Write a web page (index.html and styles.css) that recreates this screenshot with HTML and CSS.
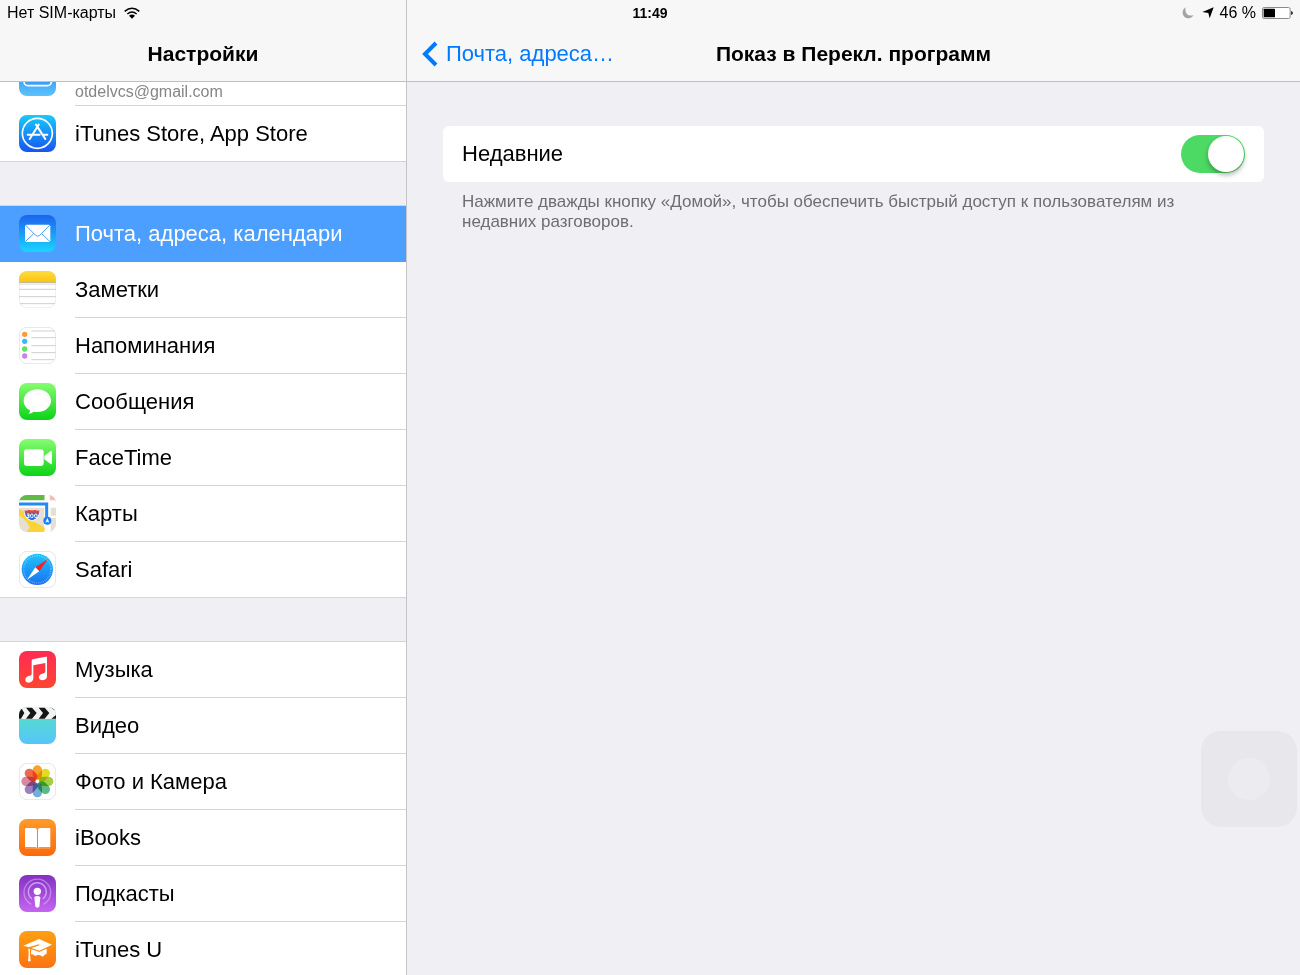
FILE: index.html
```html
<!DOCTYPE html>
<html lang="ru">
<head>
<meta charset="utf-8">
<meta name="viewport" content="width=device-width, initial-scale=1">
<title>Настройки</title>
<link rel="stylesheet" href="styles.css">
</head>
<body>
<div class="app">
  <div class="status">
    <div class="status-left">
      <span>Нет SIM-карты</span>
      <svg class="wifi" viewBox="0 0 48 36" aria-hidden="true"><g fill="none" stroke="#000" stroke-width="4.5"><path d="M2 13Q24-6 46 13"/><path d="M10 21Q24 9 38 21"/></g><path d="M15 26Q24 19 33 26L24 35Z"/></svg>
    </div>
    <time class="clock">11:49</time>
    <div class="status-right">
      <svg class="moon" viewBox="0 0 36 36" aria-hidden="true"><path fill="#a3a3a5" d="M11 1A17.500 17.500 0 1 0 35 24Q22 29 14 20Q8 11 11 1Z"/></svg>
      <svg class="arrow" viewBox="0 0 36 36" aria-hidden="true"><path d="M35 1L23 34L19 18L1 15Z"/></svg>
      <span>46 %</span>
      <svg class="battery" viewBox="0 0 93 36" aria-hidden="true"><rect x="1.5" y="1.500" width="83" height="33" rx="5" fill="#fff" stroke="#8a8a8a" stroke-width="3"/><rect x="5" y="5" width="34" height="26" rx="2"/><path fill="#333" d="M87 12Q93 14 93 18T87 24Z"/></svg>
    </div>
  </div>

  <aside class="sidebar">
    <header class="bar"><h1 class="title">Настройки</h1></header>
    <nav class="list">
      <div class="group group-scrolled">
        <a class="row" href="#icloud">
          <svg class="icon" viewBox="0 0 111 111" aria-hidden="true"><defs><linearGradient id="gCloud" x2="0" y2="1"><stop offset="0" stop-color="#1d7cf2"/><stop offset="1" stop-color="#5cc3fb"/></linearGradient></defs><rect width="111" height="111" rx="24" fill="url(#gCloud)"/><rect x="15" y="30" width="82" height="50" rx="12" fill="#3f9ff5" stroke="#fff" stroke-width="5"/></svg>
          <span class="label account">otdelvcs@gmail.com</span>
        </a>
        <a class="row" href="#store">
          <svg class="icon" viewBox="0 0 111 111" aria-hidden="true"><defs><linearGradient id="gStore" x2="0" y2="1"><stop offset="0" stop-color="#18cbfd"/><stop offset="1" stop-color="#1654f0"/></linearGradient></defs><rect width="111" height="111" rx="24" fill="url(#gStore)"/><g fill="none" stroke="#fff" stroke-width="5"><circle cx="55" cy="55" r="45"/><g stroke-width="6" stroke-linecap="round"><path d="M51 29L79 72M59 29L32 72M26 59H62M74 59H85"/></g></g></svg>
          <span class="label">iTunes Store, App Store</span>
        </a>
      </div>

      <div class="group">
        <a class="row row-selected" href="#mail" aria-current="page">
          <svg class="icon" viewBox="0 0 111 111" aria-hidden="true"><defs><linearGradient id="gMail" x2="0" y2="1"><stop offset="0" stop-color="#1d62f0"/><stop offset="1" stop-color="#19d5fd"/></linearGradient></defs><rect width="111" height="111" rx="24" fill="url(#gMail)"/><rect x="18" y="29" width="76" height="52" rx="5" fill="#fff"/><path d="M20 31L50 61Q56 66 62 61L92 31M20 79L44 56M92 79L68 56" fill="none" stroke="#4d9df7" stroke-width="3"/></svg>
          <span class="label">Почта, адреса, календари</span>
        </a>
        <a class="row" href="#notes">
          <svg class="icon" viewBox="0 0 111 111" aria-hidden="true"><defs><linearGradient id="gNotes" x2="0" y2="1"><stop offset="0" stop-color="#ffdc42"/><stop offset="1" stop-color="#fdc50c"/></linearGradient><clipPath id="tile"><rect width="111" height="111" rx="24"/></clipPath></defs><g clip-path="url(#tile)"><rect width="111" height="111" fill="#fff"/><rect width="111" height="33" fill="url(#gNotes)"/><path d="M0 35H111" stroke="#b9aa88" stroke-width="3"/><path d="M0 40H111" stroke="#e5e5e5" stroke-width="3"/><path d="M0 55H111M0 77H111M0 98H111" stroke="#cfcfd2" stroke-width="3"/></g><rect x="1" y="1" width="109" height="109" rx="23" fill="none" stroke="#ccc" stroke-opacity=".5" stroke-width="2"/></svg>
          <span class="label">Заметки</span>
        </a>
        <a class="row" href="#reminders">
          <svg class="icon" viewBox="0 0 111 111" aria-hidden="true"><rect x="1" y="1" width="109" height="109" rx="23" fill="#fff" stroke="#e6e6e8" stroke-width="3"/><path d="M37 12H107M37 32H110M37 56H110M37 77H110M37 98H105" stroke="#cfcfd2" stroke-width="3"/><circle cx="17" cy="22" r="8" fill="#ff9a2e"/><circle cx="17" cy="43" r="8" fill="#41b5fb"/><circle cx="17" cy="66" r="8" fill="#63e35d"/><circle cx="17" cy="87" r="8" fill="#ca83e8"/></svg>
          <span class="label">Напоминания</span>
        </a>
        <a class="row" href="#messages">
          <svg class="icon" viewBox="0 0 111 111" aria-hidden="true"><defs><linearGradient id="gGreen" x2="0" y2="1"><stop offset="0" stop-color="#87fc70"/><stop offset="1" stop-color="#0bd318"/></linearGradient></defs><rect width="111" height="111" rx="24" fill="url(#gGreen)"/><path fill="#fff" d="M55 19C78 19 96 34 96 53S78 87 55 87Q49 87 44 86Q38 92 28 92Q34 88 33 82C21 76 14 65 14 53C14 34 32 19 55 19Z"/></svg>
          <span class="label">Сообщения</span>
        </a>
        <a class="row" href="#facetime">
          <svg class="icon" viewBox="0 0 111 111" aria-hidden="true"><rect width="111" height="111" rx="24" fill="url(#gGreen)"/><rect x="15" y="31" width="59" height="50" rx="9" fill="#fff"/><path fill="#fff" d="M76 51L94 37Q99 34 99 40V72Q99 78 94 74L76 61Z"/></svg>
          <span class="label">FaceTime</span>
        </a>
        <a class="row" href="#maps">
          <svg class="icon" viewBox="0 0 111 111" aria-hidden="true"><g clip-path="url(#tile)"><rect width="111" height="111" fill="#e6e0d3"/><path fill="#63b947" d="M0 0H77V18H0Z"/><path fill="#f9b9b9" d="M93 0H111V18H93Z"/><path fill="#fff" d="M0 16H111V38H95V111H76V38H0ZM77 0H92V20H77ZM92 62H111V69H92Z"/><path d="M-4 50Q22 60 36 86Q48 103 76 108" fill="none" stroke="#fbd337" stroke-width="18"/><path fill="#fbd337" d="M22 111L45 80L75 96V111Z"/><path d="M0 27H83V74" fill="none" stroke="#2588f5" stroke-width="9"/><path d="M17 47Q24 49 29 45Q39 49 49 45Q54 49 61 47Q65 68 39 78Q13 68 17 47Z" fill="#2b6dcf" stroke="#fff" stroke-width="3"/><path fill="#e3443f" d="M17 46Q24 48 29 44Q39 48 49 44Q54 48 61 46V53H17Z"/><g fill="none" stroke="#fff" stroke-width="3"><path d="M24 57H30V62H26H30V68H24"/><rect x="35" y="57" width="7" height="11" rx="3"/><rect x="47" y="57" width="7" height="11" rx="3"/></g><circle cx="85" cy="77" r="12" fill="#1f7df1"/><path fill="#fff" d="M85 69L91 83L85 80L79 83Z"/></g></svg>
          <span class="label">Карты</span>
        </a>
        <a class="row" href="#safari">
          <svg class="icon" viewBox="0 0 111 111" aria-hidden="true"><defs><linearGradient id="gSafari" x2="0" y2="1"><stop offset="0" stop-color="#1cc6fb"/><stop offset="1" stop-color="#1d6ff2"/></linearGradient></defs><rect x="1" y="1" width="109" height="109" rx="23" fill="#fff" stroke="#e6e6e8" stroke-width="3"/><circle cx="55" cy="55" r="47" fill="url(#gSafari)"/><circle cx="55" cy="55" r="41" fill="none" stroke="#fff" stroke-opacity=".5" stroke-width="5" stroke-dasharray="1.500 4"/><path fill="#fb1f1f" d="M86 25L61 61L49 49Z"/><path fill="#fff" d="M24 86L49 49L61 61Z"/></svg>
          <span class="label">Safari</span>
        </a>
      </div>

      <div class="group">
        <a class="row" href="#music">
          <svg class="icon" viewBox="0 0 111 111" aria-hidden="true"><defs><linearGradient id="gMusic" x2="0" y2="1"><stop offset="0" stop-color="#ff2a55"/><stop offset="1" stop-color="#ff4631"/></linearGradient></defs><rect width="111" height="111" rx="24" fill="url(#gMusic)"/><path fill="#fff" d="M38 29Q38 26 41 25L80 17Q84 16 84 20V75Q84 86 71 88Q60 88 60 79Q60 70 70 68Q79 67 79 61V36L43 43V82Q42 93 30 95Q19 95 19 86Q19 78 29 75Q38 74 38 68Z"/></svg>
          <span class="label">Музыка</span>
        </a>
        <a class="row" href="#video">
          <svg class="icon" viewBox="0 0 111 111" aria-hidden="true"><defs><linearGradient id="gVideo" x2="0" y2="1"><stop offset="0" stop-color="#53e2bd"/><stop offset="1" stop-color="#57c5fb"/></linearGradient></defs><g clip-path="url(#tile)"><rect width="111" height="111" fill="url(#gVideo)"/><rect width="111" height="36" fill="#f2f2f2"/><path fill="#151515" d="M-12 2H6L16 18L6 35H-12L0 18ZM21 2H39L53 18L39 35H21L34 18ZM59 2H77L91 18L77 35H59L72 18ZM97 2H111V13ZM111 24V35H97Z"/></g></svg>
          <span class="label">Видео</span>
        </a>
        <a class="row" href="#photos">
          <svg class="icon" viewBox="0 0 111 111" aria-hidden="true"><defs><rect id="petal" x="41" y="7" width="28" height="43" rx="14"/></defs><rect x="1" y="1" width="109" height="109" rx="23" fill="#fff" stroke="#e6e6e8" stroke-width="3"/><g class="petals"><use href="#petal" fill="#f9a12f"/><use href="#petal" fill="#e4dc22" transform="rotate(45 55 55)"/><use href="#petal" fill="#a4cf44" transform="rotate(90 55 55)"/><use href="#petal" fill="#5dbb80" transform="rotate(135 55 55)"/><use href="#petal" fill="#75add9" transform="rotate(180 55 55)"/><use href="#petal" fill="#9b80bd" transform="rotate(225 55 55)"/><use href="#petal" fill="#d888a5" transform="rotate(270 55 55)"/><use href="#petal" fill="#ef6950" transform="rotate(315 55 55)"/></g></svg>
          <span class="label">Фото и Камера</span>
        </a>
        <a class="row" href="#ibooks">
          <svg class="icon" viewBox="0 0 111 111" aria-hidden="true"><defs><linearGradient id="gBooks" x2="0" y2="1"><stop offset="0" stop-color="#ff9a2a"/><stop offset="1" stop-color="#fb6a0c"/></linearGradient></defs><rect width="111" height="111" rx="24" fill="url(#gBooks)"/><path fill="#fff" d="M18 30Q18 27 22 27H46Q54 27 54 33V86Q51 84 46 84H18ZM57 33Q57 27 65 27H90Q94 27 94 30V84H65Q60 84 57 86Z"/><path d="M18 87H48Q55 87 56 90Q57 87 64 87H94" fill="none" stroke="#fbc9a0" stroke-width="2"/></svg>
          <span class="label">iBooks</span>
        </a>
        <a class="row" href="#podcasts">
          <svg class="icon" viewBox="0 0 111 111" aria-hidden="true"><defs><linearGradient id="gPod" x2="0" y2="1"><stop offset="0" stop-color="#8430c4"/><stop offset="1" stop-color="#c566f1"/></linearGradient></defs><rect width="111" height="111" rx="24" fill="url(#gPod)"/><g fill="none" stroke="#e4c4fa" stroke-width="4"><path stroke-opacity=".5" d="M37 88A40 40 0 1 1 73 88"/><path stroke-opacity=".7" d="M39 72A27 27 0 1 1 71 72"/></g><circle cx="55" cy="49" r="11" fill="#fff"/><path fill="#fff" d="M46 68Q46 63 55 63T64 68L61 94Q60 98 55 98T49 94Z"/></svg>
          <span class="label">Подкасты</span>
        </a>
        <a class="row" href="#itunesu">
          <svg class="icon" viewBox="0 0 111 111" aria-hidden="true"><defs><linearGradient id="gU" x2="0" y2="1"><stop offset="0" stop-color="#ff9f12"/><stop offset="1" stop-color="#fb7313"/></linearGradient></defs><rect width="111" height="111" rx="24" fill="url(#gU)"/><path fill="#fff" d="M60 24L99 41L61 59L37 51L62 43L59 40L29 49L13 44ZM37 55L61 63L83 53V68Q76 70 72 77Q60 68 48 75Q45 69 36 70ZM28 53H33V70L35 91H27L29 70Z"/></svg>
          <span class="label">iTunes U</span>
        </a>
      </div>
    </nav>
  </aside>

  <main class="detail">
    <header class="bar bar-detail">
      <a class="back" href="#mail"><svg class="chevron" viewBox="0 0 16 26" aria-hidden="true"><path d="M14 2L3 13L14 24" fill="none" stroke="#007aff" stroke-width="4"/></svg>Почта, адреса…</a>
      <h2 class="title">Показ в Перекл. программ</h2>
    </header>
    <section class="content">
      <div class="card">
        <label for="recents">Недавние</label>
        <input class="switch" type="checkbox" role="switch" id="recents" aria-describedby="hint" checked>
      </div>
      <p class="hint" id="hint">Нажмите дважды кнопку «Домой», чтобы обеспечить быстрый доступ к пользователям из недавних разговоров.</p>
    </section>
  </main>
  <button class="assistive" type="button" aria-label="AssistiveTouch"></button>
</div>
</body>
</html>
```
FILE: styles.css
```css
* {
  box-sizing: border-box;
}

body {
  margin: 0;
  background: #efeff4;
  color: #000;
  font-family: "Liberation Sans", Arial, sans-serif;
  font-size: 22px;
  line-height: 28px;
}

a {
  color: inherit;
  text-decoration: none;
}

.app {
  position: relative;
  display: grid;
  grid-template-columns: 407px 1fr;
  height: 100vh;
  overflow: hidden;
}

.status {
  position: absolute;
  inset: 0 0 auto 0;
  display: grid;
  grid-template-columns: 1fr auto 1fr;
  align-items: center;
  height: 26px;
  padding: 0 7px;
  font-size: 16px;
  line-height: 26px;
}

.status-left,
.status-right {
  display: flex;
  align-items: center;
  gap: 8px;
}

.status-right {
  justify-content: flex-end;
  gap: 6px;
}

.clock {
  font-weight: bold;
  font-size: 14px;
}

.wifi {
  width: 16px;
  height: 12px;
}

.moon,
.arrow {
  width: 12px;
  height: 12px;
}

.moon {
  margin-right: 2px;
}

.battery {
  width: 31px;
  height: 12px;
}

.sidebar {
  display: flex;
  flex-direction: column;
  min-height: 0;
  border-right: 1px solid #c4c4c8;
}

.bar {
  display: flex;
  flex: none;
  align-items: center;
  justify-content: center;
  height: 82px;
  padding-top: 26px;
  border-bottom: 1px solid #c0c0c3;
  background: #f7f7f7;
}

.title {
  margin: 0;
  font-size: 21px;
  font-weight: bold;
}

.bar-detail {
  display: grid;
  grid-template-columns: 1fr auto 1fr;
  padding-right: 15px;
  padding-left: 15px;
}

.back {
  display: flex;
  align-items: center;
  gap: 8px;
  color: #007aff;
}

.chevron {
  width: 16px;
  height: 26px;
}

.list {
  flex: 1;
  min-height: 0;
  overflow: hidden;
}

.group {
  margin-bottom: 44px;
  background: #fff;
  box-shadow: 0 -1px #d5d5d8;
}

.group-scrolled {
  margin-top: -32px;
}

.row {
  display: flex;
  gap: 19px;
  height: 56px;
  padding-left: 19px;
}

.icon {
  flex: none;
  width: 37px;
  height: 37px;
  margin-top: 9px;
}

.label {
  flex: 1;
  border-bottom: 1px solid #d5d5d8;
  line-height: 56px;
}

.row:last-child {
  border-bottom: 1px solid #d5d5d8;
}

.row:last-child .label {
  border-bottom: 0;
}

.account {
  padding-top: 32px;
  color: #868686;
  font-size: 16px;
  line-height: 20px;
}

.row-selected {
  background: #4c9fff;
  color: #fff;
}

.row-selected .label {
  border-color: #4c9fff;
}

.petals {
  isolation: isolate;
}

.petals use {
  mix-blend-mode: multiply;
}

.content {
  padding: 44px 36px;
}

.card {
  display: flex;
  align-items: center;
  justify-content: space-between;
  height: 56px;
  padding: 0 19px;
  border-radius: 6px;
  background: #fff;
}

.switch {
  display: flex;
  align-items: center;
  justify-content: flex-end;
  width: 64px;
  height: 38px;
  margin: 0;
  padding: 1px;
  border-radius: 20px;
  background: #4cd964;
  appearance: none;
}

.switch::before {
  width: 36px;
  height: 36px;
  border-radius: 50%;
  background: #fff;
  box-shadow: 0 3px 5px rgba(0, 0, 0, 0.3);
  content: "";
}

.switch:not(:checked) {
  justify-content: flex-start;
  background: #e5e5ea;
}

.hint {
  margin: 10px 19px;
  color: #6d6d72;
  font-size: 17px;
  line-height: 20px;
}

.assistive {
  position: absolute;
  right: 3px;
  bottom: 148px;
  display: grid;
  place-items: center;
  width: 96px;
  height: 96px;
  padding: 0;
  border: 0;
  border-radius: 20px;
  background: #e7e7ec;
}

.assistive::before {
  width: 42px;
  height: 42px;
  border-radius: 50%;
  background: #ebebf0;
  content: "";
}
```
